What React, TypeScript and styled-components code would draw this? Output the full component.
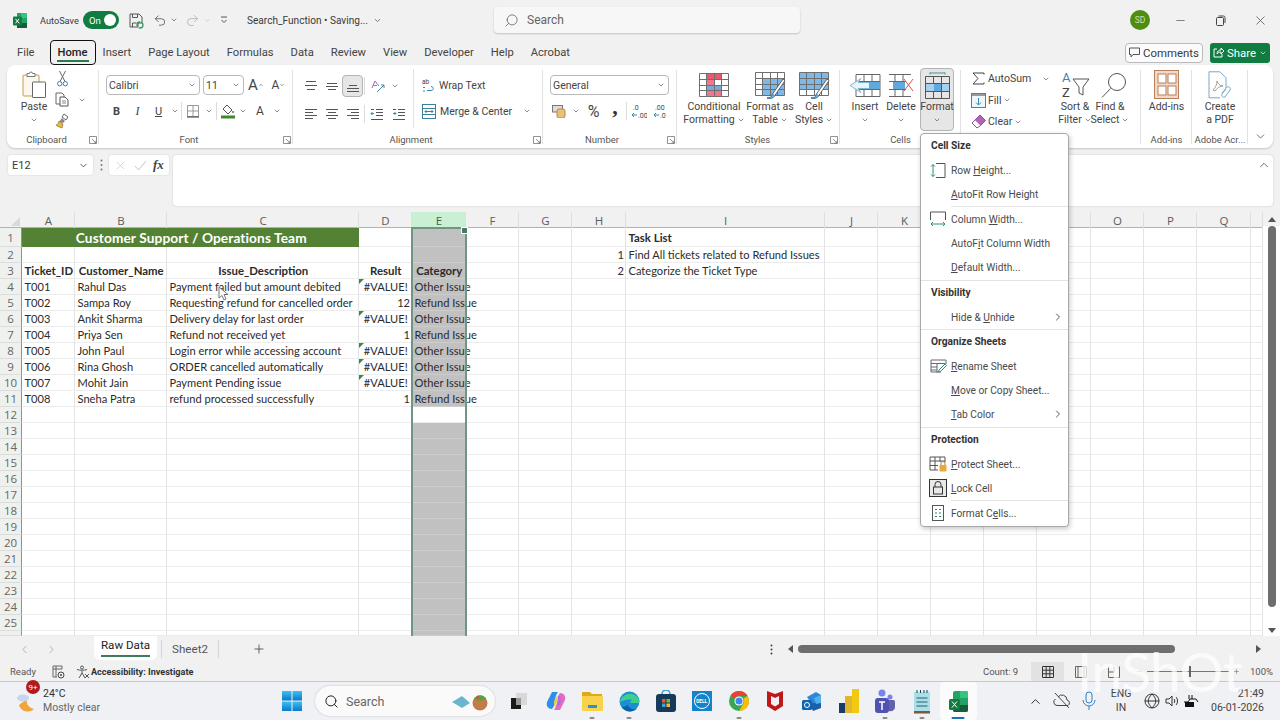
import React from 'react';
import styled, { createGlobalStyle } from 'styled-components';
import { Undo2, Redo2, Search, Minus, X, ChevronDown, ChevronUp, ChevronRight, ChevronLeft, Plus } from 'lucide-react';

const Global = createGlobalStyle`
  html, body { margin: 0; padding: 0; background: #f1f1f1; }
  * { box-sizing: border-box; }
  #root { width: 1280px; height: 720px; }
`;

const UI = `Roboto, "Liberation Sans", sans-serif`;
const CELL = `Lato, "Liberation Sans", sans-serif`;
const INK = '#3a3a3a';

const Page = styled.div`
  position: relative; width: 1280px; height: 720px; overflow: hidden; background: #f1f1f1;
  display: flex; flex-direction: column; font-family: ${UI}; color: ${INK};
`;

/* ---------- title bar ---------- */
const TitleBar = styled.div`height: 40px; display: flex; align-items: center; flex: none;`;
const TitleLeft = styled.div`width: 494px; flex: none; display: flex; align-items: center; padding-left: 13px; font-size: 10.5px;`;
const AutoSave = styled.span`margin-left: 12px; width: 43px; font-size: 9.2px; flex: none;`;
const Toggle = styled.span`
  width: 36px; height: 18px; border-radius: 9px; background: #107c41; color: #fff; font-size: 9.5px; flex: none;
  display: flex; align-items: center; justify-content: space-between; padding: 0 3px 0 6px;
  &::after { content: ''; width: 12px; height: 12px; border-radius: 50%; background: #fff; }
`;
const Qat = styled.span<{ $w: number }>`width: ${p => p.$w}px; flex: none; display: flex; justify-content: center; align-items: center;`;
const DocTitle = styled.span`font-size: 10.1px; display: flex; align-items: center; gap: 5px; white-space: nowrap;`;
const SearchBox = styled.div`
  width: 306px; height: 26px; background: #f7f7f7; border-radius: 4px; box-shadow: 0 1px 2px rgba(0,0,0,.2);
  display: flex; align-items: center; gap: 8px; padding-left: 10px; color: #666; font-size: 12px; flex: none;
`;
const TitleRight = styled.div`flex: 1; display: flex; align-items: center; justify-content: flex-end;`;
const Avatar = styled.span`
  width: 20px; height: 20px; border-radius: 50%; background: #4e8c12; color: #cfe4b0; font-size: 8.5px;
  display: flex; align-items: center; justify-content: center; margin-right: 10px;
`;
const WinBtn = styled.span`width: 40px; display: flex; justify-content: center; color: #444;`;

/* ---------- tab row ---------- */
const TabRow = styled.div`height: 25px; display: flex; align-items: center; flex: none; padding-left: 17px; font-size: 11.2px;`;
const MenuTab = styled.span<{ $active?: boolean }>`
  margin-right: 17px; white-space: nowrap; color: #444;
  ${p => p.$active ? `
    position: relative; margin: 0 7px 0 -2px; padding: 0 7px; height: 25px; line-height: 23px; border: 1.5px solid #111;
    border-radius: 4px; font-weight: 500; color: #222;
    &::after { content: ''; position: absolute; left: 6px; right: 6px; bottom: 2px; height: 2px; background: #2d7a50; }
  ` : ''}
`;
const TabSpacer = styled.span`flex: 1;`;
const CommentsBtn = styled.span`
  width: 78px; height: 20px; border: 1px solid #bbb; border-radius: 4px; background: #fbfbfb; display: flex; align-items: center;
  justify-content: center; gap: 3px; font-size: 11.4px; margin-right: 7px;
`;
const ShareBtn = styled.span`
  width: 60px; height: 20px; background: #107c41; border-radius: 3px; color: #fff; font-size: 11.4px; display: flex; align-items: center;
  justify-content: center; gap: 3px; margin-right: 10px;
`;

/* ---------- ribbon ---------- */
const Ribbon = styled.div`
  position: relative; height: 83px; margin: 0 7px; flex: none; background: #fff; border-radius: 8px;
  box-shadow: 0 1px 2px rgba(0,0,0,.18); display: flex; font-size: 10.5px; color: #444;
`;
const Group = styled.div<{ $w: number; $plain?: boolean }>`
  position: relative; width: ${p => p.$w}px; flex: none; display: flex; flex-direction: column;
  &::after { content: ''; position: absolute; right: 0; top: 5px; bottom: 4px; width: 1px; background: ${p => p.$plain ? 'transparent' : '#e2e2e2'}; }
`;
const Body = styled.div<{ $pl?: number }>`flex: 1; display: flex; padding-left: ${p => p.$pl ?? 0}px; min-height: 0;`;
const Foot = styled.div<{ $pr?: number }>`height: 17px; flex: none; text-align: center; font-size: 9.5px; line-height: 17px; color: #555; white-space: nowrap; padding-right: ${p => p.$pr ?? 0}px;`;
const Launcher = styled.span`position: absolute; right: 2px; bottom: 4px; width: 8px; height: 8px; display: flex;`;
const Big = styled.div<{ $w: number; $on?: boolean }>`
  width: ${p => p.$w}px; flex: none; display: flex; flex-direction: column; align-items: center; line-height: 13px;
  text-align: center; white-space: nowrap; padding-top: 5px; position: relative;
  ${p => p.$on ? `height: 63px; margin-top: 3px; padding-top: 1px; background: #e6e6e6; border: 1px solid #b4b4b4; border-radius: 4px;` : ''}
`;
const BigIcon = styled.div`height: 30px; display: flex; align-items: center; justify-content: center; flex: none;`;
const Line = styled.div`display: flex; align-items: center; justify-content: center; gap: 2px; height: 13px;`;
const Stack = styled.div<{ $w: number; $top?: number }>`width: ${p => p.$w}px; flex: none; display: flex; flex-direction: column; padding-top: ${p => p.$top ?? 10}px;`;
const ToolRow = styled.div<{ $h?: number; $mt?: number }>`display: flex; align-items: center; height: ${p => p.$h ?? 20}px; margin-top: ${p => p.$mt ?? 0}px; flex: none;`;
const Tool = styled.span<{ $w: number; $on?: boolean; $ml?: number }>`
  width: ${p => p.$w}px; height: 22px; flex: none; display: flex; align-items: center; justify-content: center; color: #444; font-size: 11px;
  margin-left: ${p => p.$ml ?? 0}px;
  ${p => p.$on ? 'background: #e6e6e6; border: 1px solid #b4b4b4; border-radius: 4px;' : ''}
`;
const ToolSep = styled.span`width: 1px; height: 18px; background: #dcdcdc; flex: none; margin: 0 1px;`;
const Select = styled.div<{ $w: number; $mr?: number }>`
  width: ${p => p.$w}px; height: 20px; border: 1px solid #b9b9b9; border-radius: 4px; flex: none; margin-right: ${p => p.$mr ?? 0}px;
  display: flex; align-items: center; justify-content: space-between; padding: 0 3px 0 2px; font-size: 10.5px; background: #fff;
`;
const GlyphA = styled.span<{ $s: number }>`font-size: ${p => p.$s}px; line-height: 1; color: #444;`;
const Bold = styled.b`font-size: 11px;`;
const Ital = styled.i`font-family: "Liberation Serif", serif; font-size: 12px;`;
const Und = styled.span`text-decoration: underline; font-size: 11px;`;
const TextTool = styled.div`display: flex; align-items: center; gap: 4px; white-space: nowrap; height: 20px;`;
const Pct = styled.span`font-size: 16px; color: #444;`;
const Comma = styled.span`font-size: 22px; line-height: 10px; font-weight: 700; font-family: "Liberation Serif", serif; color: #333; margin-top: -9px;`;
const Divided = styled.div<{ $w: number }>`width: ${p => p.$w}px; flex: none; border-right: 1px solid #e2e2e2; margin: 4px 0 3px; padding-top: 6px; display: flex; flex-direction: column;`;
const RightCol = styled.div`padding: 10px 0 0 8px; display: flex; flex-direction: column; gap: 6px; flex: 1;`;
const EditCol = styled.div`width: 96px; flex: none; padding: 3px 0 0 9px; display: flex; flex-direction: column;`;
const EditRow = styled.div`height: 21.5px; display: flex; align-items: center; gap: 2px; white-space: nowrap;`;
const EditIcon = styled.span`width: 16px; flex: none; display: flex; justify-content: center;`;
const Collapse = styled.div`flex: 1; display: flex; align-items: flex-end; justify-content: center; padding-bottom: 5px; color: #444;`;

/* ---------- formula bar ---------- */
const FormulaBar = styled.div`height: 51px; margin-top: 7px; padding: 0 7px 0 8px; display: flex; flex: none; align-items: flex-start;`;
const NameBox = styled.div`
  width: 85px; height: 20px; background: #fff; border-radius: 3px; box-shadow: 0 0 2px rgba(0,0,0,.15); font-size: 11px;
  display: flex; align-items: center; justify-content: space-between; padding: 0 4px; flex: none;
`;
const Dots = styled.span`width: 16px; flex: none; height: 20px; display: flex; align-items: center; justify-content: center;`;
const FxBox = styled.div`
  width: 60px; height: 20px; background: #fff; border-radius: 3px; box-shadow: 0 0 2px rgba(0,0,0,.15); flex: none;
  display: flex; align-items: center; justify-content: space-around; padding: 0 2px; color: #c4c4c4; margin-right: 4px;
`;
const Fx = styled.i`font-family: "Liberation Serif", serif; font-weight: 700; font-size: 13px; color: #444;`;
const FormulaInput = styled.div`
  flex: 1; height: 51px; background: #fff; border-radius: 4px; box-shadow: 0 0 2px rgba(0,0,0,.18);
  display: flex; justify-content: flex-end; padding: 3px 2px 0 0; color: #555;
`;

/* ---------- sheet ---------- */
const COLS = [53, 92, 192, 53, 54, 53, 53, 54, 199, 53, 53, 53, 53, 54, 53, 53, 54, 12];
const LETTERS = 'ABCDEFGHIJKLMNOPQ '.split('');
const TEMPLATE = `22px ${COLS.map(c => `${c}px`).join(' ')}`;
const SheetWrap = styled.div`height: 424px; margin-top: 6px; flex: none; display: flex; position: relative; overflow: hidden;`;
const Grid = styled.div`width: 1263px; flex: none; background: #fff; position: relative; overflow: hidden;`;
const Row = styled.div<{ $h: number }>`display: grid; grid-template-columns: ${TEMPLATE}; height: ${p => p.$h}px;`;
const HeadRow = styled(Row)`background: #f1f1f1; border-bottom: 1px solid #b2b2b2;`;
const Corner = styled.div`
  position: relative;
  &::after { content: ''; position: absolute; right: 2px; bottom: 2px; width: 0; height: 0; border-left: 9px solid transparent; border-bottom: 9px solid #d9d9d9; }
`;
const ColHead = styled.div<{ $sel?: boolean }>`
  font-size: 11.5px; color: #5c5c5c; display: flex; align-items: center; justify-content: center; font-family: "Open Sans", sans-serif;
  padding: 1px 0 0 1px; border-right: 1px solid #dedede; ${p => p.$sel ? 'background: #c9f0d3; color: #40634f;' : ''}
`;
const RowHead = styled.div`
  font-size: 11.5px; color: #666; display: flex; align-items: center; justify-content: center; font-family: "Open Sans", sans-serif;
  background: #eef1ee; border-right: 1px solid #7e9c8d; border-bottom: 1px solid #dcdcdc;
`;
const Cell = styled.div<{ $align?: string; $bold?: boolean; $sel?: boolean; $warn?: boolean; $span?: number; $band?: boolean }>`
  position: relative; font-family: ${CELL}; font-size: ${p => p.$bold ? 11.4 : 11.1}px; color: #2b2b2b; white-space: nowrap; line-height: 15px; padding: 0 1px 0 2.5px;
  display: flex; align-items: center;
  justify-content: ${p => p.$align === 'c' ? 'center' : p.$align === 'r' ? 'flex-end' : 'flex-start'};
  font-weight: ${p => p.$bold ? 700 : 400};
  border-right: 1px solid ${p => p.$sel ? '#c8c8c8' : '#e3e3e3'};
  border-bottom: 1px solid ${p => p.$sel ? '#cdcdcd' : '#ececec'};
  background: ${p => p.$sel ? '#c1c1c1' : 'transparent'};
  ${p => p.$span ? `grid-column: span ${p.$span};` : ''}
  ${p => p.$band ? 'background: #548235; color: #fff; font-size: 13.7px; border: 0; letter-spacing: .1px;' : ''}
  ${p => p.$warn ? `&::before { content: ''; position: absolute; left: 0; top: 0; border-top: 5px solid #2f8f46; border-right: 5px solid transparent; }` : ''}
`;
const Frame = styled.div`
  position: absolute; left: 411px; top: 15px; bottom: 0; width: 56px; border: 2px solid #6f9585; border-bottom: 0; pointer-events: none;
  &::after { content: ''; position: absolute; right: -3px; top: -2px; width: 5px; height: 5px; background: #4c7a66; border: 1px solid #fff; }
`;
const Cursor = styled.svg`position: absolute; left: 218px; top: 74px;`;
const VScroll = styled.div`flex: 1; background: #fff; display: flex; flex-direction: column; align-items: center;`;
const VHead = styled.div`height: 14px; background: #f1f1f1; width: 100%; flex: none; display: flex; align-items: flex-end; justify-content: center; padding-bottom: 4px;`;
const VThumb = styled.div`width: 8px; height: 381px; background: #6e6e6e; border-radius: 4px; flex: none;`;
const VDown = styled.div`margin-top: 21px; border-left: 4px solid transparent; border-right: 4px solid transparent; border-top: 5px solid #555;`;
const UpTri = styled.div`border-left: 4px solid transparent; border-right: 4px solid transparent; border-bottom: 5px solid #555;`;

/* ---------- sheet tabs ---------- */
const SheetBar = styled.div`height: 26px; flex: none; display: flex; align-items: center; color: #777; font-size: 11.6px;`;
const Nav = styled.span<{ $w: number; $ml?: number }>`width: ${p => p.$w}px; margin-left: ${p => p.$ml ?? 0}px; flex: none; display: flex; justify-content: center; color: #999;`;
const TabActive = styled.div`
  width: 63px; height: 24px; background: #fff; border-radius: 0 0 6px 6px; margin-top: -3px; flex: none; color: #222; position: relative;
  display: flex; align-items: center; justify-content: center; padding-bottom: 5px;
  &::after { content: ''; position: absolute; left: 7px; right: 7px; bottom: 3px; height: 2px; background: #3e7a5b; }
`;
const TabSep = styled.span<{ $ml?: number }>`width: 1px; height: 18px; background: #d4d4d4; margin-left: ${p => p.$ml ?? 4}px; flex: none;`;
const TabPlain = styled.div`width: 56px; text-align: center; flex: none; color: #555;`;
const AddTab = styled.span`width: 80px; flex: none; display: flex; justify-content: center; color: #444;`;
const HDots = styled.span`margin-left: 463px; width: 19px; flex: none; display: flex; justify-content: center;`;
const HArrow = styled.span<{ $dir: 'l' | 'r' }>`
  border-top: 4px solid transparent; border-bottom: 4px solid transparent; flex: none;
  ${p => p.$dir === 'l' ? 'border-right: 5px solid #555; margin-left: 7px;' : 'border-left: 5px solid #555; margin-left: 81px;'}
`;
const HThumb = styled.span`width: 377px; height: 8px; border-radius: 4px; background: #6e6e6e; margin-left: 5px; flex: none;`;

/* ---------- status bar ---------- */
const StatusBar = styled.div`height: 20px; flex: none; display: flex; align-items: center; font-size: 9.5px; color: #555; border-bottom: 1px solid #c9c9c9; padding-left: 10px;`;
const StatusIcon = styled.span`margin-left: 13px; width: 20px; display: flex; justify-content: center; flex: none;`;
const A11y = styled.span`display: flex; align-items: center; gap: 1px; font-weight: 700; color: #333; font-size: 9.1px; margin-left: 7px; flex: none;`;
const StatusSpacer = styled.span`flex: 1;`;
const Count = styled.span`width: 48px; flex: none;`;
const ViewBtn = styled.span<{ $on?: boolean }>`width: 33px; height: 19px; flex: none; display: flex; align-items: center; justify-content: center; ${p => p.$on ? 'background: #e2e2e2;' : ''}`;
const Slider = styled.div`width: 110px; flex: none; display: flex; align-items: center; padding-left: 6px; gap: 4px; color: #777;`;
const Track = styled.div`width: 82px; height: 1px; background: #777; position: relative; flex: none;
  &::after { content: ''; position: absolute; left: 42px; top: -5px; width: 2px; height: 11px; background: #666; }`;
const ZoomLabel = styled.span`width: 40px; flex: none; padding-left: 10px;`;

/* ---------- task bar ---------- */
const TaskBar = styled.div`flex: 1; display: flex; align-items: center; background: #eff1f4;`;
const Weather = styled.div`width: 282px; flex: none; display: flex; align-items: center; padding-left: 16px; position: relative;`;
const Badge = styled.span`
  position: absolute; left: 26px; top: -7px; width: 14px; height: 14px; border-radius: 50%; background: #b31b1b; color: #fff;
  font-size: 8px; display: flex; align-items: center; justify-content: center;
`;
const WeatherText = styled.div`margin-left: 7px; font-size: 10.5px; line-height: 14px; color: #333;`;
const WeatherSub = styled.div`color: #666;`;
const TbSearch = styled.div`
  width: 180px; height: 30px; margin: 0 6px 0 13px; border-radius: 15px; background: #fafafa; box-shadow: 0 0 2px rgba(0,0,0,.22); flex: none;
  display: flex; align-items: center; padding-left: 9px; gap: 7px; color: #666; font-size: 12.5px;
`;
const TbSearchArt = styled.span`margin-left: auto; margin-right: 3px; display: flex;`;
const TaskItem = styled.span<{ $on?: boolean; $open?: boolean }>`
  width: 36.6px; height: 38px; flex: none; display: flex; align-items: center; justify-content: center; position: relative;
  ${p => p.$on ? 'background: #fbfbfb; border-radius: 4px;' : ''}
  ${p => p.$open ? `&::after { content: ''; position: absolute; bottom: 1px; left: 50%; transform: translateX(-50%); height: 2px; border-radius: 1px;
    width: ${p.$on ? 13 : 5}px; background: ${p.$on ? '#1a6fb5' : '#8a8a8a'}; }` : ''}
`;
const TaskSpacer = styled.span`flex: 1;`;
const Tray = styled.div`width: 257px; flex: none; display: flex; align-items: center; color: #444;`;
const TrayItem = styled.span<{ $w: number }>`width: ${p => p.$w}px; flex: none; display: flex; justify-content: center; align-items: center;`;
const Lang = styled.span`width: 40px; flex: none; text-align: center; font-size: 10.5px; line-height: 14px;`;
const Clock = styled.span`flex: 1; text-align: right; padding-right: 16px; font-size: 10.5px; line-height: 14px;`;

/* ---------- format menu ---------- */
const Menu = styled.div`
  position: absolute; left: 920px; top: 133px; width: 149px; height: 394px; background: #fff; border: 1px solid #a8a8a8; border-radius: 4px;
  box-shadow: 1px 2px 5px rgba(0,0,0,.22); font-size: 10.2px; color: #4a4a4a; z-index: 5;
`;
const MenuHead = styled.div`height: 24px; display: flex; align-items: center; padding: 0 0 2px 10px; font-weight: 700; color: #333; font-size: 10.2px;`;
const MenuItem = styled.div`height: 24px; display: flex; align-items: center; position: relative; padding-left: 30px; white-space: nowrap;`;
const MenuIco = styled.span`position: absolute; left: 8px; top: 3px; width: 18px; height: 18px; display: flex; align-items: center; justify-content: center;`;
const MenuArrow = styled.span`position: absolute; right: 4px; top: 6px; display: flex; color: #555;`;
const MenuSep = styled.div<{ $inset?: boolean; $h?: number }>`
  height: ${p => p.$h ?? 1}px; display: flex; align-items: flex-end; padding-left: ${p => p.$inset ? 30 : 0}px;
  &::after { content: ''; height: 1px; flex: 1; background: #e3e3e3; }
`;
const Watermark = styled.div`
  position: absolute; left: 1077px; top: 636px; font-family: Lato, sans-serif; font-weight: 400; font-size: 55px; letter-spacing: -.5px;
  color: rgba(255,255,255,.72); z-index: 6; pointer-events: none; line-height: 70px;
`;

/* ---------- icons ---------- */
type SP = { w: number; h?: number; children: React.ReactNode };
const Ico = ({ w, h = w, children }: SP) => <svg width={w} height={h} viewBox={`0 0 ${w} ${h}`} fill="none">{children}</svg>;
const Chev = ({ s = 8 }: { s?: number }) => <ChevronDown size={s} strokeWidth={2} color="#555" />;
const Hl = ({ rows, w = 14, c = '#555' }: { rows: [number, number, number][]; w?: number; c?: string }) => (
  <Ico w={w} h={14}>{rows.map(([y, a, b], i) => <path key={i} d={`M${a} ${y}.5H${b}`} stroke={c} />)}</Ico>
);
const LaunchIco = () => (
  <svg width="8" height="8" viewBox="0 0 8 8" fill="none"><path d="M.5 7.5V.5h7v7h-7M3 3l4 4M7 4.5V7H4.5" stroke="#777" strokeWidth=".8" /></svg>
);
const ExcelLogo = () => (
  <Ico w={15} h={17}>
    <path d="M4 1h9a1 1 0 0 1 1 1v13a1 1 0 0 1-1 1H4z" fill="#21a366" /><path d="M8 1h5a1 1 0 0 1 1 1v4H8z" fill="#33c481" />
    <path d="M4 11h10v4a1 1 0 0 1-1 1H4z" fill="#185c37" /><rect x="0" y="4.5" width="9" height="9" rx="1" fill="#107c41" />
    <path d="M2.5 6.8l3.6 4.5M6.1 6.8l-3.6 4.5" stroke="#fff" />
  </Ico>
);
const SaveIco = () => (
  <Ico w={15} h={17}>
    <path d="M1 2h9l3 3v6H9v4H1z" stroke="#555" /><path d="M3.5 2v3.5h5V2M3.5 15v-4h4" stroke="#555" />
    <circle cx="11" cy="13" r="3" stroke="#2a9d5c" strokeWidth="1.3" strokeDasharray="6 2" />
  </Ico>
);
const Qa = () => <Ico w={8} h={8}><path d="M1 1h6M1.5 4l2.5 2.5L6.5 4" stroke="#555" /></Ico>;
const PasteIco = () => (
  <Ico w={25} h={28}>
    <rect x="1" y="4" width="16" height="21" rx="1" stroke="#c49a4e" fill="#fdf8ef" />
    <path d="M5 5V2.5h2.5a1.5 1.5 0 0 1 3 0H13V5.5H5z" stroke="#777" fill="#fff" />
    <rect x="10.5" y="11" width="13" height="15.5" rx=".5" stroke="#666" fill="#fff" />
  </Ico>
);
const CutIco = () => (
  <Ico w={11} h={17}>
    <path d="M2.5 1l5.5 10.5M8.5 1L3 11.5" stroke="#666" />
    <circle cx="2.7" cy="13.7" r="2.2" stroke="#3d7ea6" /><circle cx="8.3" cy="13.7" r="2.2" stroke="#3d7ea6" />
  </Ico>
);
const CopyIco = () => (
  <Ico w={14} h={15}>
    <path d="M1 1h6l2 2v9H1z" stroke="#666" fill="#fff" /><path d="M5 5h5l3 3v6H5z" stroke="#555" fill="#fff" /><path d="M7 9h4M7 11h4" stroke="#888" />
  </Ico>
);
const BrushIco = () => (
  <Ico w={14} h={16}>
    <path d="M9 1l4 3-2 3-4-3z" stroke="#666" fill="#fff" /><path d="M7 5l3 3-2 2-4-1z" fill="#888" />
    <path d="M4 8l4 3-1 4-5-2-1-1c2 0 2-2 3-4z" fill="#e8b54a" stroke="#9c7421" strokeWidth=".7" />
  </Ico>
);
const BordersIco = () => <Ico w={14} h={14}><path d="M1.5 1.5h11v11h-11zM7 1.5v11M1.5 7h11" stroke="#999" /><path d="M1 13h12" stroke="#555" strokeWidth="1.2" /></Ico>;
const FillIco = () => (
  <Ico w={14} h={15}><path d="M6 1l5 5-4 4-5-5z" stroke="#555" /><circle cx="12" cy="8" r="1" fill="#666" /><rect x="0" y="11.5" width="14" height="3" fill="#3f8a2a" /></Ico>
);
const OrientIco = () => <Ico w={14} h={14}><path d="M1 9l3-7 4 5M2.3 6.5l3.7 0" stroke="#a06ac2" /><path d="M6 13l7-7M13 6h-3M13 6v3" stroke="#3b8bb0" /></Ico>;
const IndentIco = ({ rev }: { rev?: boolean }) => (
  <Ico w={14} h={13}><path d="M6 1.5h7M6 4.5h7M6 7.5h7M1 11.5h12M1 1.5h3" stroke="#555" />
    <path d={rev ? 'M4 5.5H1m0 0l1.5-1.5M1 5.5L2.5 7' : 'M1 5.5h3m0 0L2.5 4M4 5.5L2.5 7'} stroke="#2f8fb0" /></Ico>
);
const WrapIco = () => (
  <Ico w={13} h={15}><text x="0" y="6" fontSize="6.5" fill="#444" fontFamily="Roboto">ab</text><path d="M9 8.5c3 0 3 4 0 4H5" stroke="#2f8fb0" /><path d="M1 9.5h2M3 13H1" stroke="#2f8fb0" /></Ico>
);
const MergeIco = () => (
  <Ico w={14} h={15}><rect x=".5" y=".5" width="13" height="14" stroke="#3d7f9a" fill="#fff" /><path d="M.5 4.5h13M.5 10.5h13" stroke="#3d7f9a" /><path d="M3 7.5h8M3 7.5l1.5-1.5M3 7.5L4.5 9M11 7.5L9.5 6M11 7.5L9.5 9" stroke="#3d7f9a" /></Ico>
);
const CurrIco = () => (
  <Ico w={16} h={14}><rect x=".5" y="1.5" width="10" height="6.5" stroke="#777" fill="#ddd" /><rect x="5" y="5" width="8" height="9" rx="2" fill="#e8c078" stroke="#b48a3e" /></Ico>
);
const DecIco = ({ more }: { more?: boolean }) => (
  <Ico w={16} h={15}>
    <text x="2" y="6" fontSize="7" fill="#444" fontFamily="Roboto">{more ? '.0' : '.00'}</text>
    <text x="7" y="13.5" fontSize="7" fill="#444" fontFamily="Roboto">{more ? '.00' : '.0'}</text>
    <path d="M1 11h5M1 11l2-2M1 11l2 2" stroke="#2f8fb0" />
  </Ico>
);
const TableGrid = ({ x, y }: { x: number; y: number }) => (
  <path d={`M${x} ${y}h29v23h-29zM${x + 7} ${y}v23M${x + 15} ${y}v23M${x + 22} ${y}v23M${x} ${y + 6}h29M${x} ${y + 12}h29M${x} ${y + 17}h29`} stroke="#6f6f6f" />
);
const CondIco = () => (
  <Ico w={30} h={24}>
    <rect x="7" y="1" width="15" height="6" fill="#e85a72" /><rect x="7" y="13" width="15" height="5" fill="#7aa9d6" /><rect x="7" y="18" width="15" height="5" fill="#f0788c" /><rect x="7" y="7" width="8" height="6" fill="#f0788c" />
    <TableGrid x={0.5} y={0.5} />
  </Ico>
);
const BrushOver = () => (
  <g>
    <path d="M12 26c3 .4 5-1 5.5-4L28 7l2 1.5L19.5 24c-2 2.5-5 3-7.5 2z" fill="#fff" stroke="#555" strokeWidth=".9" />
    <path d="M12 26c3 .4 5-1 5.5-4l2.5 1.8c-2 2.7-5 3-8 2.2z" fill="#6cb2e6" stroke="#3e7fae" strokeWidth=".7" />
  </g>
);
const FormatTableIco = () => (
  <Ico w={31} h={27}><rect x="8" y="7" width="21" height="16" fill="#7fb9e8" /><TableGrid x={0.5} y={0.5} /><BrushOver /></Ico>
);
const CellStylesIco = () => (
  <Ico w={31} h={27}><rect x="1" y="1" width="28" height="16" fill="#7fb9e8" /><TableGrid x={0.5} y={0.5} /><BrushOver /></Ico>
);
const InsertIco = () => (
  <Ico w={32} h={25}>
    <path d="M7 1.5h24v22H7zM15 1.5v22M23 1.5v22M7 8.5h24M7 16.5h24" stroke="#666" /><rect x="7" y="9" width="24" height="7" fill="#5fa9dc" />
    <path d="M20 9.5H9l3-4-11 7 11 7-3-4h11" stroke="#7fb9d8" fill="#eaf5fb" />
  </Ico>
);
const DeleteIco = () => (
  <Ico w={26} h={25}>
    <path d="M1 1.5h22M1 8.5h17M1 16.5h17M1 23.5h22M7 1.5v22M15 1.5v22" stroke="#666" /><rect x="5" y="9" width="12" height="7" fill="#5fa9dc" />
    <path d="M16 6l9 12M25 6l-9 12" stroke="#d9534f" />
  </Ico>
);
const FormatIco = () => (
  <Ico w={25} h={27}>
    <path d="M5 1h15M5 .5v2M20 .5v2" stroke="#3f8fa8" />
    <path d="M.5 4.5h24v22H.5zM8.5 4.5v22M16.5 4.5v22M.5 11.5h24M.5 19.5h24" stroke="#555" /><rect x="9" y="12" width="7" height="7" fill="#5fa9dc" /><rect x="1" y="12" width="8" height="7" fill="#a6d0ef" /><rect x="17" y="12" width="7" height="7" fill="#a6d0ef" />
  </Ico>
);
const SigmaIco = () => (
  <svg width="13" height="13" viewBox="0 0 13 13" fill="none"><path d="M12 2.5V1H1l5 5.5L1 12h11v-1.5" stroke="#444" strokeWidth="1" /></svg>
);
const FillDown = () => <Ico w={15} h={15}><rect x=".5" y=".5" width="14" height="14" stroke="#777" fill="#eef6fc" /><rect x="1" y="1" width="13" height="2" fill="#999" /><path d="M7.5 5v7M5 9.5l2.5 2.5L10 9.5" stroke="#2f8fb0" /></Ico>;
const EraserIco = () => <Ico w={15} h={15}><path d="M9 1l5.5 5.5-5 5L4 6z" fill="#b063b8" stroke="#8d4b96" /><path d="M4 6L1 9l5 5 3.5-2.5" fill="#fff" stroke="#8d4b96" /></Ico>;
const SortIco = () => (
  <Ico w={29} h={31}>
    <text x="1" y="12" fontSize="13" fill="#3d82b5" fontFamily="Roboto">A</text><text x="1" y="27" fontSize="13" fill="#444" fontFamily="Roboto">Z</text>
    <path d="M12 9h16l-6 8v8l-4-2v-6z" stroke="#555" />
  </Ico>
);
const FindIco = () => <Ico w={34} h={28}><circle cx="24" cy="11" r="8.5" stroke="#555" /><path d="M17.5 17.5L9 26.5" stroke="#555" /></Ico>;
const AddinsIco = () => (
  <Ico w={26} h={30}><rect x=".5" y=".5" width="24" height="28" fill="#f0d9c8" stroke="#b9805c" /><rect x="4" y="4" width="8" height="9" fill="#fff" stroke="#b9805c" /><rect x="14" y="4" width="8" height="9" fill="#fff" stroke="#b9805c" /><rect x="4" y="16" width="8" height="9" fill="#fff" stroke="#b9805c" /><rect x="14" y="16" width="8" height="9" fill="#fff" stroke="#b9805c" /></Ico>
);
const PdfIco = () => (
  <Ico w={24} h={29}><path d="M1 .8h11l6 6v10M1 .8v26h11" stroke="#7aa7c7" /><path d="M5 19c3-3 4-6 4-9 1 3 3 5 6 5-3 0-6 2-8 5z" stroke="#888" strokeWidth=".8" /><path d="M14 22l5-6a2.2 2.2 0 0 1 3 3l-5 7a2.2 2.2 0 0 1-3-3l4-5" stroke="#7aa7c7" /></Ico>
);
const MiRow = () => <Ico w={16} h={17}><path d="M3 2.5v12M1 4.5l2-2 2 2M1 12.5l2 2 2-2" stroke="#2f8f7a" /><path d="M6 1.5h9v14H6" stroke="#555" /></Ico>;
const MiCol = () => <Ico w={18} h={16}><path d="M1.5 9V1h15v8" stroke="#555" /><path d="M2 13h14M4 11l-2 2 2 2M14 11l2 2-2 2" stroke="#2f8f7a" /></Ico>;
const MiRename = () => <Ico w={17} h={14}><path d="M1 1h15v4M1 1v12h10M1 4.5h14M1 8h6M1 11h6M7 4.5v9" stroke="#667" /><path d="M9 11l6-6 1.5 1.5-6 6-2 .5z" stroke="#2f8f7a" /></Ico>;
const MiProtect = () => <Ico w={18} h={16}><path d="M1 1h15v5M1 1v13h8M1 5h15M1 9.5h8M6 1v13M11 1v5" stroke="#555" /><rect x="10.5" y="9" width="7" height="6.5" rx=".8" fill="#e8a93c" /><path d="M12 9V7.5a2 2 0 0 1 4 0V9" stroke="#b5802a" /></Ico>;
const MiLock = () => <Ico w={18} h={18}><rect x=".5" y=".5" width="17" height="17" fill="#e8e8e8" stroke="#333" /><rect x="4.5" y="8" width="9" height="7" stroke="#333" /><path d="M6 8V5.5a3 3 0 0 1 6 0V8" stroke="#333" /></Ico>;
const MiCells = () => <Ico w={12} h={16}><rect x=".5" y=".5" width="11" height="15" stroke="#555" /><path d="M3 4.5h2M3 8h2M3 11.5h2M7 4.5h2M7 8h2M7 11.5h2" stroke="#2f7f7a" /></Ico>;

/* task-bar art */
const WeatherIco = () => (
  <Ico w={20} h={24}><path d="M3 13a9 9 0 0 0 15 4 8 8 0 0 1-7-10" fill="#f2a33a" transform="translate(0 3)" /><ellipse cx="7" cy="9" rx="6" ry="3.5" fill="#c6d6ec" /></Ico>
);
const WinLogo = () => (
  <Ico w={20} h={20}>
    <defs><linearGradient id="wl" x1="0" y1="0" x2="0" y2="1"><stop stopColor="#3dc0f0" /><stop offset="1" stopColor="#0b78c9" /></linearGradient></defs>
    <rect x="0" y="0" width="9.5" height="9.5" fill="url(#wl)" /><rect x="10.5" y="0" width="9.5" height="9.5" fill="url(#wl)" /><rect x="0" y="10.5" width="9.5" height="9.5" fill="url(#wl)" /><rect x="10.5" y="10.5" width="9.5" height="9.5" fill="url(#wl)" />
  </Ico>
);
const SearchArt = () => (
  <Ico w={40} h={20}><path d="M0 11l10-6 8 7-8 5z" fill="#6bb6cf" /><circle cx="28" cy="12" r="7.5" fill="#c27b4a" /><path d="M22 8c3-5 10-5 12 0-4 2-8 2-12 0z" fill="#5aa23e" /><circle cx="26" cy="6" r="1.5" fill="#d94c3a" /></Ico>
);
const TaskView = () => <Ico w={16} h={16}><rect x="0" y="5" width="10" height="11" fill="#1a1a1a" /><rect x="5" y="0" width="11" height="12" fill="#d8d8d8" /><rect x="5" y="5" width="5" height="7" fill="#9a9a9a" /></Ico>;
const Copilot = () => (
  <Ico w={20} h={20}><path d="M6 1h6c-2 3-4 8-4 14l-2 3c-4 0-6-3-5-7z" fill="#2f8fe8" /><path d="M14 19H8c2-3 4-8 4-14l2-3c4 0 6 3 5 7z" fill="#e86ac0" /><path d="M8 15c0-6 2-10 4-10-1 5-1 9-4 10z" fill="#f0c83a" /><path d="M12 5c4 0 3 5 2 9l-5 2c3-2 3-7 3-11z" fill="#a66de8" /></Ico>
);
const Explorer = () => (
  <Ico w={21} h={22}><path d="M0 2h8l2 2h10v15H0z" fill="#e0a91c" /><rect x="0" y="6" width="21" height="15" rx="1" fill="#f7d24a" /><rect x="6" y="15" width="9" height="3" fill="#2d8fd9" /></Ico>
);
const Edge = () => (
  <Ico w={21} h={21}>
    <circle cx="10.5" cy="10.5" r="10" fill="#1a8fd6" /><path d="M1 11C2 5 8 2 13 3c5 1 8 5 7 9h-9c0-2 2-3 2-3-3-1-8 0-12 2z" fill="#3ecf8e" /><path d="M3 16c3 5 10 6 15 2-4 1-8 0-9-4-2 1-4 2-6 2z" fill="#0d5fa6" />
  </Ico>
);
const Store = () => (
  <Ico w={20} h={22}><path d="M6 4a4 4 0 0 1 8 0" stroke="#2f9fc4" strokeWidth="1.5" /><rect x="0" y="4" width="20" height="18" rx="3" fill="#173a5a" /><rect x="6" y="9" width="3.5" height="3.5" fill="#e55b2d" /><rect x="10.5" y="9" width="3.5" height="3.5" fill="#7fba2d" /><rect x="6" y="13.5" width="3.5" height="3.5" fill="#2ea5e0" /><rect x="10.5" y="13.5" width="3.5" height="3.5" fill="#f5b82e" /></Ico>
);
const Dell = () => (
  <Ico w={20} h={20}><rect width="20" height="20" fill="#1583c9" /><circle cx="10" cy="10" r="7.5" stroke="#fff" /><text x="4.2" y="11.8" fontSize="4.8" fontWeight="700" fill="#fff" fontFamily="Roboto">DELL</text></Ico>
);
const Chrome = () => (
  <Ico w={20} h={20}>
    <circle cx="10" cy="10" r="10" fill="#34a853" /><path d="M10 0a10 10 0 0 1 8.66 5H10a5 5 0 0 0-4.33 2.5L1.34 5A10 10 0 0 1 10 0z" fill="#ea4335" /><path d="M18.66 5A10 10 0 0 1 10 20l4.33-7.5A5 5 0 0 0 14.33 7.5z" fill="#fbbc05" />
    <circle cx="10" cy="10" r="4.5" fill="#fff" /><circle cx="10" cy="10" r="3.5" fill="#4285f4" />
  </Ico>
);
const McAfee = () => <Ico w={18} h={22}><path d="M1 1l8 3 8-3v15l-8 5-8-5z" fill="#c01818" /><path d="M5 6l4 2 4-2v8l-4 2.5L5 14z" fill="#f1f1f4" /></Ico>;
const Outlook = () => (
  <Ico w={20} h={21}><path d="M5 6l9-5 5 3v8L9 12z" fill="#2f86d6" /><path d="M7 12h12v5l-8 3z" fill="#1a5fa8" /><path d="M12 7l7-3v8l-5 1z" fill="#50b0ea" /><rect x="0" y="9" width="10" height="10" rx="1.5" fill="#0f64b0" /><circle cx="5" cy="14" r="2.5" stroke="#fff" /></Ico>
);
const PowerBi = () => <Ico w={20} h={24}><rect x="0" y="14" width="6" height="10" fill="#1a3a6a" /><rect x="6" y="7" width="7" height="17" fill="#e0b62e" /><rect x="13" y="0" width="7" height="24" fill="#f2c811" /></Ico>;
const Teams = () => (
  <Ico w={20} h={24}><circle cx="7" cy="4" r="3.5" fill="#7b83eb" /><circle cx="15" cy="8" r="2.5" fill="#7b83eb" /><path d="M11 11h7c2 0 2 1 2 3v4c0 3-3 5-6 4z" fill="#6264a7" /><rect x="0" y="9" width="14" height="15" rx="3" fill="#4f52b2" /><path d="M4 13h6M7 13v8" stroke="#fff" strokeWidth="1.5" /></Ico>
);
const Notepad = () => (
  <Ico w={16} h={25}><rect x="0" y="3" width="16" height="21" rx="1" fill="#a9dfe9" /><path d="M3 1v3M6.5 1v3M10 1v3M13 1v3" stroke="#1a3f4a" /><path d="M2.5 9h11M2.5 13h11M2.5 17h11" stroke="#2f5f6f" /><rect x="0" y="22" width="16" height="2.5" fill="#7a5a3a" /></Ico>
);
const ExcelBig = () => (
  <Ico w={19} h={23}>
    <rect x="4" y="1" width="15" height="21" rx="2" fill="#21a366" /><path d="M11 1h6a2 2 0 0 1 2 2v5h-8z" fill="#33c481" /><path d="M4 15h15v5a2 2 0 0 1-2 2H6a2 2 0 0 1-2-2z" fill="#185c37" />
    <rect x="0" y="9" width="11" height="11" rx="1.5" fill="#107c41" /><path d="M3 11.5l5 6M8 11.5l-5 6" stroke="#fff" />
  </Ico>
);
const CloudOff = () => <Ico w={20} h={18}><path d="M6 5a5 5 0 0 1 9 3 3 3 0 0 1 1 5.5H5A3.5 3.5 0 0 1 3.5 7" stroke="#444" /><path d="M3 1l14 15" stroke="#444" /></Ico>;
const Mic = () => <Ico w={14} h={20}><rect x="4" y="1" width="6" height="11" rx="3" stroke="#2f82c9" /><path d="M1 9a6 6 0 0 0 12 0M7 15v4" stroke="#2f82c9" /></Ico>;
const Globe = () => <Ico w={16} h={16}><circle cx="8" cy="8" r="7" stroke="#333" /><path d="M1 8h14M8 1c-5 5-5 9 0 14M8 1c5 5 5 9 0 14" stroke="#333" /></Ico>;
const Vol = () => <Ico w={14} h={14}><path d="M1 5h3l3-3v10L4 9H1z" stroke="#333" /><path d="M9 5c1 1 1 3 0 4M11 3c2 2 2 6 0 8" stroke="#333" /></Ico>;
const Batt = () => <Ico w={16} h={16}><path d="M1 9h4l2-3h6l2 3" stroke="#111" /><rect x="2" y="9" width="9" height="5" fill="#111" /><path d="M6 2v4M9 2v4" stroke="#111" /></Ico>;

/* ---------- data ---------- */
type C = { t?: string; a?: string; b?: boolean; w?: boolean };
const ROWS: Record<number, Record<string, C>> = {
  3: { A: { t: 'Ticket_ID', a: 'c', b: true }, B: { t: 'Customer_Name', a: 'c', b: true }, C: { t: 'Issue_Description', a: 'c', b: true }, D: { t: 'Result', a: 'c', b: true }, E: { t: 'Category', a: 'c', b: true } },
};
const TICKETS: [string, string, string, string, string][] = [
  ['T001', 'Rahul Das', 'Payment failed but amount debited', '#VALUE!', 'Other Issue'],
  ['T002', 'Sampa Roy', 'Requesting refund for cancelled order', '12', 'Refund Issue'],
  ['T003', 'Ankit Sharma', 'Delivery delay for last order', '#VALUE!', 'Other Issue'],
  ['T004', 'Priya Sen', 'Refund not received yet', '1', 'Refund Issue'],
  ['T005', 'John Paul', 'Login error while accessing account', '#VALUE!', 'Other Issue'],
  ['T006', 'Rina Ghosh', 'ORDER cancelled automatically', '#VALUE!', 'Other Issue'],
  ['T007', 'Mohit Jain', 'Payment Pending issue', '#VALUE!', 'Other Issue'],
  ['T008', 'Sneha Patra', 'refund processed successfully', '1', 'Refund Issue'],
];
TICKETS.forEach((t, i) => {
  const err = t[3] === '#VALUE!';
  ROWS[i + 4] = { A: { t: t[0] }, B: { t: t[1] }, C: { t: t[2] }, D: { t: t[3], a: err ? 'c' : 'r', w: err }, E: { t: t[4] } };
});
const extra = (r: number, k: string, c: C) => { ROWS[r] = { ...(ROWS[r] || {}), [k]: c }; };
extra(1, 'I', { t: 'Task List', b: true });
extra(2, 'H', { t: '1', a: 'r' }); extra(2, 'I', { t: 'Find All tickets related to Refund Issues' });
extra(3, 'H', { t: '2', a: 'r' }); extra(3, 'I', { t: 'Categorize the Ticket Type' });

const SheetRow = ({ n }: { n: number }) => {
  const data = ROWS[n] || {};
  const h = n === 1 ? 19 : n === 26 ? 5 : 16;
  const letters = n === 1 ? LETTERS.slice(3) : LETTERS;
  return (
    <Row $h={h}>
      <RowHead>{n < 26 ? n : ''}</RowHead>
      {n === 1 && <Cell $span={3} $align="c" $bold $band>Customer Support / Operations Team</Cell>}
      {letters.map((l, i) => {
        const c = data[l] || {};
        return <Cell key={i} $align={c.a} $bold={c.b} $warn={c.w} $sel={l === 'E' && n !== 12}>{c.t}</Cell>;
      })}
    </Row>
  );
};

const FormatMenu = () => (
  <Menu>
    <MenuHead>Cell Size</MenuHead>
    <MenuItem><MenuIco><MiRow /></MenuIco><span>Row <u>H</u>eight...</span></MenuItem>
    <MenuItem><span><u>A</u>utoFit Row Height</span></MenuItem>
    <MenuSep $inset />
    <MenuItem><MenuIco><MiCol /></MenuIco><span>Column <u>W</u>idth...</span></MenuItem>
    <MenuItem><span>AutoF<u>i</u>t Column Width</span></MenuItem>
    <MenuItem><span><u>D</u>efault Width...</span></MenuItem>
    <MenuSep $h={2} />
    <MenuHead>Visibility</MenuHead>
    <MenuItem><span>Hide &amp; <u>U</u>nhide</span><MenuArrow><ChevronRight size={12} /></MenuArrow></MenuItem>
    <MenuSep />
    <MenuHead>Organize Sheets</MenuHead>
    <MenuItem><MenuIco><MiRename /></MenuIco><span><u>R</u>ename Sheet</span></MenuItem>
    <MenuItem><span><u>M</u>ove or Copy Sheet...</span></MenuItem>
    <MenuItem><span><u>T</u>ab Color</span><MenuArrow><ChevronRight size={12} /></MenuArrow></MenuItem>
    <MenuSep $h={2} />
    <MenuHead>Protection</MenuHead>
    <MenuItem><MenuIco><MiProtect /></MenuIco><span><u>P</u>rotect Sheet...</span></MenuItem>
    <MenuItem><MenuIco><MiLock /></MenuIco><span><u>L</u>ock Cell</span></MenuItem>
    <MenuSep $inset />
    <MenuItem><MenuIco><MiCells /></MenuIco><span>Format C<u>e</u>lls...</span></MenuItem>
  </Menu>
);

export default function App() {
  return (
    <Page>
      <Global />
      <TitleBar>
        <TitleLeft>
          <ExcelLogo />
          <AutoSave>AutoSave</AutoSave>
          <Toggle>On</Toggle>
          <Qat $w={34}><SaveIco /></Qat>
          <Qat $w={14}><Undo2 size={15} color="#555" strokeWidth={1.4} /></Qat>
          <Qat $w={14}><Chev /></Qat>
          <Qat $w={22}><Redo2 size={15} color="#b5b5b5" strokeWidth={1.4} /></Qat>
          <Qat $w={8}><ChevronDown size={7} color="#bbb" /></Qat>
          <Qat $w={26}><Qa /></Qat>
          <Qat $w={10} />
          <DocTitle><span>Search_Function  •  Saving...</span><Chev s={9} /></DocTitle>
        </TitleLeft>
        <SearchBox><Search size={15} strokeWidth={1.3} style={{ transform: 'scaleX(-1)' }} />Search</SearchBox>
        <TitleRight>
          <Avatar>SD</Avatar>
          <WinBtn><Minus size={13} strokeWidth={1.2} /></WinBtn>
          <WinBtn><svg width="11" height="11" viewBox="0 0 11 11" fill="none"><rect x="1.5" y="2.5" width="7" height="8" rx="1" stroke="#444" /><path d="M3.5 1h5A1.500 1.500 0 0 1 10 2.5V8" stroke="#444" /></svg></WinBtn>
          <WinBtn><X size={15} strokeWidth={1.1} /></WinBtn>
        </TitleRight>
      </TitleBar>

      <TabRow>
        <MenuTab>File</MenuTab>
        <MenuTab $active>Home</MenuTab>
        <MenuTab>Insert</MenuTab>
        <MenuTab>Page Layout</MenuTab>
        <MenuTab>Formulas</MenuTab>
        <MenuTab>Data</MenuTab>
        <MenuTab>Review</MenuTab>
        <MenuTab>View</MenuTab>
        <MenuTab>Developer</MenuTab>
        <MenuTab>Help</MenuTab>
        <MenuTab>Acrobat</MenuTab>
        <TabSpacer />
        <CommentsBtn><svg width="11" height="11" viewBox="0 0 11 11" fill="none"><path d="M.5 1h10v6.5H4L2 10V7.5H.5z" stroke="#555" /></svg>Comments</CommentsBtn>
        <ShareBtn><svg width="11" height="11" viewBox="0 0 11 11" fill="none"><path d="M4 2H1v8h8V7M4 7c0-3 2-4 4-4V1l3 3-3 3V5c-2 0-3 1-4 2z" stroke="#fff" /></svg>Share <ChevronDown size={8} /></ShareBtn>
      </TabRow>

      <Ribbon>
        <Group $w={92}>
          <Body $pl={13}>
            <Big $w={28}><BigIcon><PasteIco /></BigIcon><Line>Paste</Line><Line><Chev /></Line></Big>
            <Stack $w={34} $top={2}>
              <ToolRow $h={22}><Tool $w={28}><CutIco /></Tool></ToolRow>
              <ToolRow $h={21}><Tool $w={28}><CopyIco /></Tool><Tool $w={12}><Chev /></Tool></ToolRow>
              <ToolRow $h={21}><Tool $w={28}><BrushIco /></Tool></ToolRow>
            </Stack>
          </Body>
          <Foot $pr={13}>Clipboard</Foot>
          <Launcher><LaunchIco /></Launcher>
        </Group>

        <Group $w={194}>
          <Body $pl={7}>
            <Stack $w={187}>
              <ToolRow>
                <Select $w={94} $mr={3}>Calibri<Chev /></Select>
                <Select $w={41}>11<Chev /></Select>
                <Tool $w={24}><GlyphA $s={15}>A</GlyphA><ChevronUp size={6} /></Tool>
                <Tool $w={21}><GlyphA $s={12}>A</GlyphA><ChevronDown size={6} /></Tool>
              </ToolRow>
              <ToolRow $mt={5} $h={22}>
                <Tool $w={21}><Bold>B</Bold></Tool>
                <Tool $w={21}><Ital>I</Ital></Tool>
                <Tool $w={21}><Und>U</Und></Tool>
                <Tool $w={11}><Chev /></Tool>
                <ToolSep />
                <Tool $w={20}><BordersIco /></Tool>
                <Tool $w={12}><Chev /></Tool>
                <ToolSep />
                <Tool $w={20}><FillIco /></Tool>
                <Tool $w={10}><Chev /></Tool>
                <Tool $w={24}><GlyphA $s={12}>A</GlyphA></Tool>
                <Tool $w={10}><Chev /></Tool>
              </ToolRow>
            </Stack>
          </Body>
          <Foot $pr={14}>Font</Foot>
          <Launcher><LaunchIco /></Launcher>
        </Group>

        <Group $w={250}>
          <Body $pl={7}>
            <Divided $w={114}>
              <ToolRow $h={22}>
                <Tool $w={21}><Hl rows={[[2, 2, 12], [6, 1, 13], [10, 3, 11]]} /></Tool>
                <Tool $w={21}><Hl rows={[[4, 2, 12], [7, 1, 13], [10, 3, 11]]} /></Tool>
                <Tool $w={21} $on><Hl rows={[[6, 3, 11], [9, 1, 13], [12, 1, 13]]} /></Tool>
                <ToolSep />
                <Tool $w={24}><OrientIco /></Tool>
                <Tool $w={10}><Chev /></Tool>
              </ToolRow>
              <ToolRow $h={22} $mt={6}>
                <Tool $w={21}><Hl rows={[[2, 1, 13], [5, 1, 9], [8, 1, 13], [11, 1, 9]]} /></Tool>
                <Tool $w={21}><Hl rows={[[2, 1, 13], [5, 3, 11], [8, 1, 13], [11, 3, 11]]} /></Tool>
                <Tool $w={21}><Hl rows={[[2, 1, 13], [5, 5, 13], [8, 1, 13], [11, 5, 13]]} /></Tool>
                <ToolSep />
                <Tool $w={22}><IndentIco rev /></Tool>
                <Tool $w={22}><IndentIco /></Tool>
              </ToolRow>
            </Divided>
            <RightCol>
              <TextTool><WrapIco />Wrap Text</TextTool>
              <TextTool><MergeIco />Merge &amp; Center<Tool $w={16} $ml={3}><Chev /></Tool></TextTool>
            </RightCol>
          </Body>
          <Foot $pr={14}>Alignment</Foot>
          <Launcher><LaunchIco /></Launcher>
        </Group>

        <Group $w={134}>
          <Body $pl={7}>
            <Stack $w={126}>
              <ToolRow><Select $w={119}>General<Chev /></Select></ToolRow>
              <ToolRow $h={22} $mt={5}>
                <Tool $w={20}><CurrIco /></Tool>
                <Tool $w={12}><Chev /></Tool>
                <Tool $w={23}><Pct>%</Pct></Tool>
                <Tool $w={20}><Comma>,</Comma></Tool>
                <ToolSep />
                <Tool $w={22}><DecIco more /></Tool>
                <Tool $w={22}><DecIco /></Tool>
              </ToolRow>
            </Stack>
          </Body>
          <Foot $pr={16}>Number</Foot>
          <Launcher><LaunchIco /></Launcher>
        </Group>

        <Group $w={163}>
          <Body $pl={5}>
            <Big $w={64}><BigIcon><CondIco /></BigIcon><Line>Conditional</Line><Line>Formatting <Chev /></Line></Big>
            <Big $w={48}><BigIcon><FormatTableIco /></BigIcon><Line>Format as</Line><Line>Table <Chev /></Line></Big>
            <Big $w={40}><BigIcon><CellStylesIco /></BigIcon><Line>Cell</Line><Line>Styles <Chev /></Line></Big>
          </Body>
          <Foot $pr={2}>Styles</Foot>
          <Launcher><LaunchIco /></Launcher>
        </Group>

        <Group $w={121}>
          <Body $pl={8}>
            <Big $w={34}><BigIcon><InsertIco /></BigIcon><Line>Insert</Line><Line><Chev /></Line></Big>
            <Big $w={38}><BigIcon><DeleteIco /></BigIcon><Line>Delete</Line><Line><Chev /></Line></Big>
            <Big $w={34} $on><BigIcon><FormatIco /></BigIcon><Line>Format</Line><Line><Chev /></Line></Big>
          </Body>
          <Foot>Cells</Foot>
        </Group>

        <Group $w={180}>
          <Body>
            <EditCol>
              <EditRow><EditIcon><SigmaIco /></EditIcon><span>AutoSum</span><Tool $w={20} $ml={3}><Chev /></Tool></EditRow>
              <EditRow><EditIcon><FillDown /></EditIcon><span>Fill</span><Chev /></EditRow>
              <EditRow><EditIcon><EraserIco /></EditIcon><span>Clear</span><Chev /></EditRow>
            </EditCol>
            <Big $w={36}><BigIcon><SortIco /></BigIcon><Line>Sort &amp;</Line><Line>Filter <Chev /></Line></Big>
            <Big $w={34}><BigIcon><FindIco /></BigIcon><Line>Find &amp;</Line><Line>Select <Chev /></Line></Big>
          </Body>
        </Group>

        <Group $w={51}>
          <Body><Big $w={51}><BigIcon><AddinsIco /></BigIcon><Line>Add-ins</Line></Big></Body>
          <Foot>Add-ins</Foot>
        </Group>

        <Group $w={56}>
          <Body><Big $w={56}><BigIcon><PdfIco /></BigIcon><Line>Create</Line><Line>a PDF</Line></Big></Body>
          <Foot>Adobe Acr...</Foot>
        </Group>

        <Collapse><ChevronDown size={13} strokeWidth={1.4} /></Collapse>
      </Ribbon>

      <FormulaBar>
        <NameBox>E12<Chev s={11} /></NameBox>
        <Dots><svg width="3" height="12" viewBox="0 0 3 12"><circle cx="1.5" cy="1.5" r="1" fill="#777" /><circle cx="1.5" cy="6" r="1" fill="#777" /><circle cx="1.5" cy="10.5" r="1" fill="#777" /></svg></Dots>
        <FxBox><X size={13} strokeWidth={1.2} /><svg width="13" height="11" viewBox="0 0 13 11" fill="none"><path d="M1 6l3.5 4L12 1" stroke="#c4c4c4" /></svg><Fx>fx</Fx></FxBox>
        <FormulaInput><ChevronUp size={14} strokeWidth={1.4} /></FormulaInput>
      </FormulaBar>

      <SheetWrap>
        <Grid>
          <HeadRow $h={16}>
            <Corner />
            {LETTERS.map((l, i) => <ColHead key={i} $sel={l === 'E'}>{l}</ColHead>)}
          </HeadRow>
          {Array.from({ length: 26 }, (_, i) => <SheetRow key={i} n={i + 1} />)}
          <Frame />
          <Cursor width="12" height="16" viewBox="0 0 12 16"><path d="M1 1v11l3-2.5 2 4.5 2-1-2-4.5h4z" fill="#fff" stroke="#555" strokeWidth=".8" /></Cursor>
        </Grid>
        <VScroll>
          <VHead><UpTri /></VHead>
          <VThumb />
          <VDown />
        </VScroll>
      </SheetWrap>

      <SheetBar>
        <Nav $w={24} $ml={12}><ChevronLeft size={13} strokeWidth={1.3} /></Nav>
        <Nav $w={30}><ChevronRight size={13} strokeWidth={1.3} /></Nav>
        <Nav $w={28} />
        <TabActive>Raw Data</TabActive>
        <TabSep />
        <TabPlain>Sheet2</TabPlain>
        <TabSep $ml={0} />
        <AddTab><Plus size={14} strokeWidth={1.4} /></AddTab>
        <HDots><svg width="3" height="11" viewBox="0 0 3 11"><circle cx="1.5" cy="1.5" r="1" fill="#444" /><circle cx="1.5" cy="5.5" r="1" fill="#444" /><circle cx="1.5" cy="9.5" r="1" fill="#444" /></svg></HDots>
        <HArrow $dir="l" />
        <HThumb />
        <HArrow $dir="r" />
      </SheetBar>

      <StatusBar>
        Ready
        <StatusIcon><svg width="13" height="14" viewBox="0 0 13 14" fill="none"><path d="M1 1h9v3M1 1v11h4M1 4h9M4 1v11" stroke="#666" /><circle cx="9" cy="10" r="3" stroke="#444" /><circle cx="9" cy="10" r="1" fill="#444" /></svg></StatusIcon>
        <A11y><svg width="14" height="14" viewBox="0 0 14 14" fill="none"><circle cx="6" cy="2.5" r="1.5" stroke="#555" /><path d="M1 4.5c3 1 7 1 10 0M6 6v2M3 13l3-5 3 5M9 9l4 4M13 9l-4 4" stroke="#555" /></svg>Accessibility: Investigate</A11y>
        <StatusSpacer />
        <Count>Count: 9</Count>
        <ViewBtn $on><svg width="12" height="12" viewBox="0 0 12 12" fill="none"><path d="M.5.5h11v11H.5zM4.2.5v11M7.8.5v11M.5 4.2h11M.5 7.8h11" stroke="#333" /></svg></ViewBtn>
        <ViewBtn><svg width="12" height="12" viewBox="0 0 12 12" fill="none"><path d="M.5.5h11v11H.5zM3 .5v11M9 .5v11" stroke="#666" /></svg></ViewBtn>
        <ViewBtn><svg width="12" height="12" viewBox="0 0 12 12" fill="none"><path d="M.5.5v11h11V.5M.5 6H6V.5" stroke="#666" /></svg></ViewBtn>
        <Slider><Minus size={7} /><Track /><Plus size={7} /></Slider>
        <ZoomLabel>100%</ZoomLabel>
      </StatusBar>

      <TaskBar>
        <Weather>
          <WeatherIco /><Badge>9+</Badge>
          <WeatherText>24°C<WeatherSub>Mostly clear</WeatherSub></WeatherText>
        </Weather>
        <WinLogo />
        <TbSearch><Search size={15} color="#222" strokeWidth={1.6} />Search<TbSearchArt><SearchArt /></TbSearchArt></TbSearch>
        <TaskItem><TaskView /></TaskItem>
        <TaskItem><Copilot /></TaskItem>
        <TaskItem $open><Explorer /></TaskItem>
        <TaskItem $open><Edge /></TaskItem>
        <TaskItem><Store /></TaskItem>
        <TaskItem><Dell /></TaskItem>
        <TaskItem $open><Chrome /></TaskItem>
        <TaskItem><McAfee /></TaskItem>
        <TaskItem><Outlook /></TaskItem>
        <TaskItem><PowerBi /></TaskItem>
        <TaskItem $open><Teams /></TaskItem>
        <TaskItem $open><Notepad /></TaskItem>
        <TaskItem $on $open><ExcelBig /></TaskItem>
        <TaskSpacer />
        <Tray>
          <TrayItem $w={24}><ChevronUp size={15} strokeWidth={1.5} color="#222" /></TrayItem>
          <TrayItem $w={30}><CloudOff /></TrayItem>
          <TrayItem $w={24}><Mic /></TrayItem>
          <Lang>ENG<br />IN</Lang>
          <TrayItem $w={21}><Globe /></TrayItem>
          <TrayItem $w={19}><Vol /></TrayItem>
          <TrayItem $w={20}><Batt /></TrayItem>
          <Clock>21:49<br />06-01-2026</Clock>
        </Tray>
      </TaskBar>

      <FormatMenu />
      <Watermark>InShOt</Watermark>
    </Page>
  );
}
